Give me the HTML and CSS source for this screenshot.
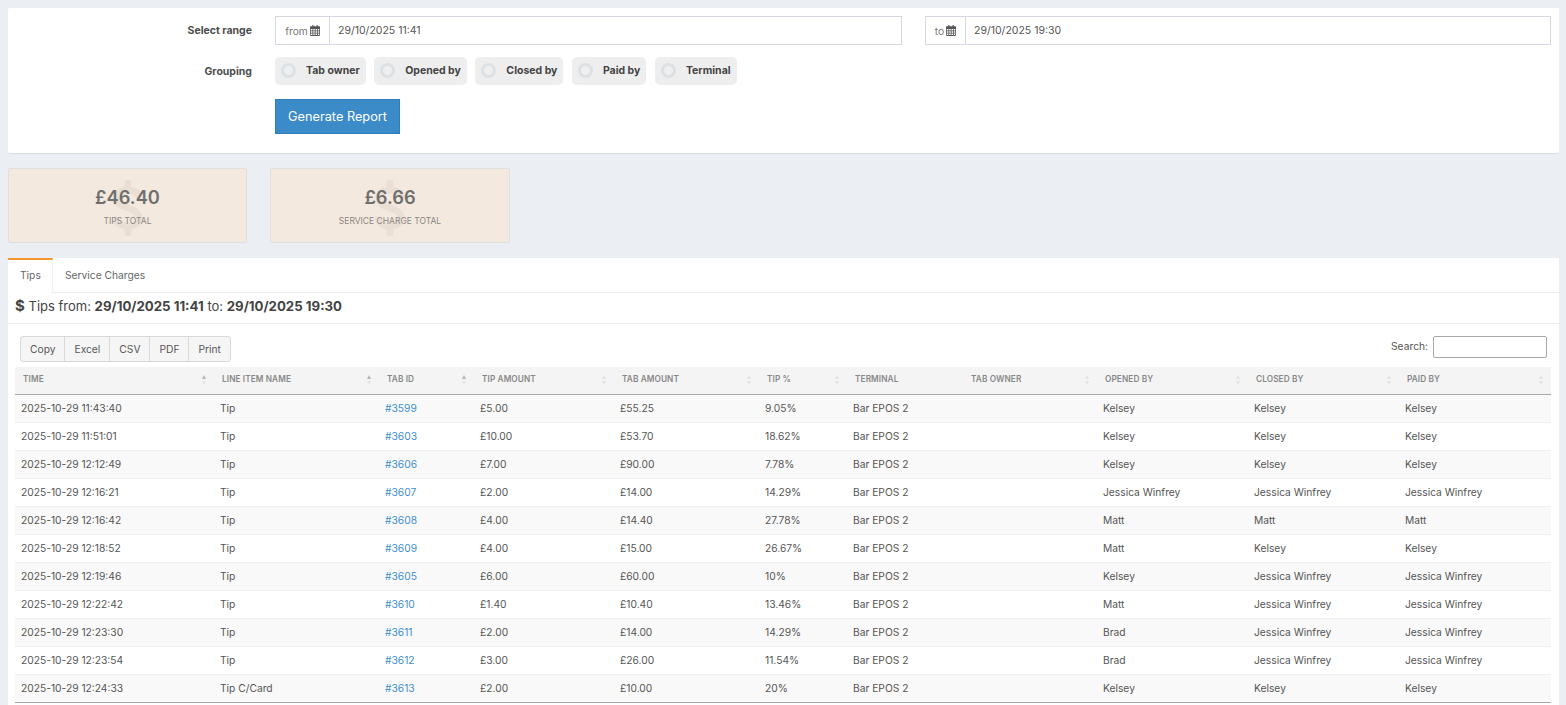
FILE: index.html
```html
<!DOCTYPE html>
<html lang="en">
<head>
<meta charset="utf-8">
<title>Tips report</title>
<link rel="stylesheet" href="styles.css">
</head>
<body>
<svg class="sprite" width="0" height="0" aria-hidden="true"><symbol id="cal" viewBox="0 0 13 14"><path d="M3 0h1.5v1.5h4V0H10v1.5h2a1 1 0 0 1 1 1V13a1 1 0 0 1-1 1H1a1 1 0 0 1-1-1V2.500a1 1 0 0 1 1-1h2zM1 5v2h2.200V5zm3.200 0v2h2V5zm3 0v2h2V5zm3 0v2H12V5zM1 8v2h2.200V8zm3.200 0v2h2V8zm3 0v2h2V8zm3 0v2H12V8zM1 11v2h2.200v-2zm3.200 0v2h2v-2zm3 0v2h2v-2zm3 0v2H12v-2z" fill-rule="evenodd"/></symbol><symbol id="dollar" viewBox="0 0 32 56"><path d="M16 3v6M16 47v6M27 16c-2-4-6-6-11-6C9 10 5 13 5 18c0 6 5 8 11 10s11 4 11 10c0 5-4 8-11 8-6 0-10-2-12-6" fill="none" stroke="currentColor" stroke-width="7" stroke-linecap="round"/></symbol></svg>
<section class="filter">
  <div class="row range-row">
    <div class="label">Select range</div>
    <div class="range-inputs">
      <div class="date"><span class="addon from">from <svg class="cal"><use href="#cal"/></svg></span><span class="value">29/10/2025 11:41</span></div>
      <div class="date"><span class="addon to">to <svg class="cal"><use href="#cal"/></svg></span><span class="value">29/10/2025 19:30</span></div>
    </div>
  </div>
  <div class="row group-row">
    <div class="label">Grouping</div>
    <div class="pills">
      <div class="pill"><i class="radio"></i>Tab owner</div>
      <div class="pill"><i class="radio"></i>Opened by</div>
      <div class="pill"><i class="radio"></i>Closed by</div>
      <div class="pill"><i class="radio"></i>Paid by</div>
      <div class="pill"><i class="radio"></i>Terminal</div>
    </div>
  </div>
  <div class="row btn-row">
    <div class="label"></div>
    <button class="generate">Generate Report</button>
  </div>
</section>

<section class="cards">
  <div class="card"><svg class="ghost" aria-hidden="true"><use href="#dollar"/></svg><div class="amount">£46.40</div><div class="cap">TIPS TOTAL</div></div>
  <div class="card"><svg class="ghost" aria-hidden="true"><use href="#dollar"/></svg><div class="amount">£6.66</div><div class="cap">SERVICE CHARGE TOTAL</div></div>
</section>

<section class="panel">
  <div class="tabs"><div class="tab active">Tips</div><div class="tab">Service Charges</div></div>
  <h2 class="title"><b class="dollar">$</b> Tips from: <b>29/10/2025 11:41</b> to: <b>29/10/2025 19:30</b></h2>
  <div class="body">
    <div class="tools">
      <div class="btns"><span>Copy</span><span>Excel</span><span>CSV</span><span>PDF</span><span>Print</span></div>
      <label class="search">Search: <span class="search-box"></span></label>
    </div>
    <table>
      <colgroup>
        <col class="c1"><col class="c2"><col class="c3"><col class="c4"><col class="c5"><col class="c6"><col class="c7"><col class="c8"><col class="c9"><col class="c10"><col class="c11">
      </colgroup>
      <thead>
        <tr>
          <th class="up">TIME</th><th class="up">LINE ITEM NAME</th><th class="up">TAB ID</th><th>TIP AMOUNT</th><th>TAB AMOUNT</th><th>TIP %</th><th class="plain">TERMINAL</th><th>TAB OWNER</th><th>OPENED BY</th><th>CLOSED BY</th><th>PAID BY</th>
        </tr>
      </thead>
      <tbody>
        <tr><td>2025-10-29 11:43:40</td><td>Tip</td><td><a>#3599</a></td><td>£5.00</td><td>£55.25</td><td>9.05%</td><td>Bar EPOS 2</td><td></td><td>Kelsey</td><td>Kelsey</td><td>Kelsey</td></tr>
        <tr><td>2025-10-29 11:51:01</td><td>Tip</td><td><a>#3603</a></td><td>£10.00</td><td>£53.70</td><td>18.62%</td><td>Bar EPOS 2</td><td></td><td>Kelsey</td><td>Kelsey</td><td>Kelsey</td></tr>
        <tr><td>2025-10-29 12:12:49</td><td>Tip</td><td><a>#3606</a></td><td>£7.00</td><td>£90.00</td><td>7.78%</td><td>Bar EPOS 2</td><td></td><td>Kelsey</td><td>Kelsey</td><td>Kelsey</td></tr>
        <tr><td>2025-10-29 12:16:21</td><td>Tip</td><td><a>#3607</a></td><td>£2.00</td><td>£14.00</td><td>14.29%</td><td>Bar EPOS 2</td><td></td><td>Jessica Winfrey</td><td>Jessica Winfrey</td><td>Jessica Winfrey</td></tr>
        <tr><td>2025-10-29 12:16:42</td><td>Tip</td><td><a>#3608</a></td><td>£4.00</td><td>£14.40</td><td>27.78%</td><td>Bar EPOS 2</td><td></td><td>Matt</td><td>Matt</td><td>Matt</td></tr>
        <tr><td>2025-10-29 12:18:52</td><td>Tip</td><td><a>#3609</a></td><td>£4.00</td><td>£15.00</td><td>26.67%</td><td>Bar EPOS 2</td><td></td><td>Matt</td><td>Kelsey</td><td>Kelsey</td></tr>
        <tr><td>2025-10-29 12:19:46</td><td>Tip</td><td><a>#3605</a></td><td>£6.00</td><td>£60.00</td><td>10%</td><td>Bar EPOS 2</td><td></td><td>Kelsey</td><td>Jessica Winfrey</td><td>Jessica Winfrey</td></tr>
        <tr><td>2025-10-29 12:22:42</td><td>Tip</td><td><a>#3610</a></td><td>£1.40</td><td>£10.40</td><td>13.46%</td><td>Bar EPOS 2</td><td></td><td>Matt</td><td>Jessica Winfrey</td><td>Jessica Winfrey</td></tr>
        <tr><td>2025-10-29 12:23:30</td><td>Tip</td><td><a>#3611</a></td><td>£2.00</td><td>£14.00</td><td>14.29%</td><td>Bar EPOS 2</td><td></td><td>Brad</td><td>Jessica Winfrey</td><td>Jessica Winfrey</td></tr>
        <tr><td>2025-10-29 12:23:54</td><td>Tip</td><td><a>#3612</a></td><td>£3.00</td><td>£26.00</td><td>11.54%</td><td>Bar EPOS 2</td><td></td><td>Brad</td><td>Jessica Winfrey</td><td>Jessica Winfrey</td></tr>
        <tr><td>2025-10-29 12:24:33</td><td>Tip C/Card</td><td><a>#3613</a></td><td>£2.00</td><td>£10.00</td><td>20%</td><td>Bar EPOS 2</td><td></td><td>Kelsey</td><td>Kelsey</td><td>Kelsey</td></tr>
      </tbody>
    </table>
  </div>
</section>
</body>
</html>
```

FILE: styles.css
```css
* { box-sizing: border-box; }
html, body { height: 705px; overflow: hidden; }
body {
  margin: 0;
  padding: 8px 7px 0 8px;
  background: #ebeff4;
  font-family: Inter, "Liberation Sans", sans-serif;
  font-size: 10.25px;
  color: #4a4a4a;
}
.sprite { position: absolute; }

.filter {
  height: 146px;
  background: #fff;
  border-bottom: 1px solid #d9dce2;
  border-radius: 2px;
  padding: 8px 8px 0 0;
}
.row { display: flex; }
.label {
  width: 245px;
  padding-right: 1px;
  margin-right: 22px;
  text-align: right;
  font-weight: 700;
  font-size: 10.5px;
  color: #4d4d4d;
  flex: none;
}
.range-row { height: 29px; align-items: center; }
.range-inputs { flex: 1; display: flex; gap: 23px; }
.date {
  flex: 1;
  display: flex;
  height: 29px;
  border: 1px solid #d5d8e1;
  background: #fff;
}
.date:first-child { flex: 0 0 627px; }
.addon {
  display: flex;
  align-items: center;
  justify-content: center;
  gap: 2px;
  border-right: 1px solid #d5d8e1;
  color: #777;
  flex: none;
}
.addon.from { width: 54px; }
.addon.to { width: 40px; }
.cal { width: 10px; height: 11px; fill: #555; }
.value { padding-left: 8px; line-height: 27px; color: #555; font-size: 10.5px; }

.group-row { margin-top: 12px; height: 28px; }
.group-row .label { padding-top: 8px; }
.pills { display: flex; gap: 8.5px; }
.pill {
  height: 28px;
  padding: 0 6px 2px 6px;
  display: flex;
  align-items: center;
  background: #eee;
  border-radius: 5px;
  font-weight: 700;
  font-size: 10.5px;
  color: #444;
}
.radio {
  width: 15px;
  height: 15px;
  border: 3px solid #dce1e5;
  border-radius: 50%;
  background: #efefef;
  margin-right: 10px;
  flex: none;
}
.btn-row { margin-top: 14px; }
.generate {
  width: 125px;
  height: 35px;
  background: #3a8bc8;
  border: 1px solid #2f7db8;
  color: #fff;
  font-family: inherit;
  font-size: 12.75px;
  padding: 0 0 1px;
}

.cards { display: flex; gap: 23px; margin-top: 14px; }
.card {
  position: relative;
  width: 239px;
  height: 75px;
  background: #f4e9df;
  border: 1px solid #dfdfdf;
  border-radius: 2px;
  text-align: center;
  padding-top: 16px;
}
.card + .card { width: 240px; }
.ghost {
  position: absolute;
  left: calc(50% - 16px);
  top: 11px;
  width: 32px;
  height: 56px;
  color: #eadfd5;
}
.amount { position: relative; font-size: 18.25px; line-height: 24px; font-weight: 600; color: #6f6f6f; }
.cap { position: relative; margin-top: 7px; font-size: 8.5px; line-height: 11px; color: #8a8684; }

.panel { margin-top: 15px; background: #fff; height: 447px; }
.tabs { display: flex; height: 35px; border-bottom: 1px solid #eee; }
.tab { padding: 10px 12px 0; line-height: 15px; color: #666; }
.tab.active { width: 45px; border-top: 2px solid #f6962e; padding-top: 8px; border-right: 1px solid #eee; background: #fff; height: 35px; }
.title {
  margin: 0;
  height: 31px;
  border-bottom: 1px solid #eee;
  padding: 5px 0 0 7px;
  font-size: 13px;
  line-height: 16px;
  font-weight: 400;
  color: #444;
}
.title b { font-weight: 700; font-size: 13.25px; }
.title .dollar { font-size: 15px; font-weight: 700; }
.body { padding: 12px 8px 0 7px; }
.tools { display: flex; justify-content: space-between; padding: 0 4px 0 5px; height: 31px; }
.btns { display: flex; height: 26px; background: #f5f5f5; border: 1px solid #d9d9d9; border-radius: 3px; }
.btns span { padding: 0 9px; line-height: 24px; color: #555; border-right: 1px solid #d9d9d9; }
.btns span:last-child { border-right: 0; }
.search { display: flex; align-items: flex-start; gap: 5px; line-height: 21px; color: #555; }
.search-box { width: 114px; height: 22px; border: 1px solid #a9a9a9; border-radius: 2px; background: #fff; }

table { width: 1536px; border-collapse: collapse; table-layout: fixed; border-bottom: 1px solid #a8a8a8; }
.c1 { width: 199px; } .c2 { width: 165px; } .c3 { width: 95px; } .c4 { width: 140px; }
.c5 { width: 145px; } .c6 { width: 88px; } .c7 { width: 116px; } .c8 { width: 134px; }
.c9 { width: 151px; } .c10 { width: 151px; } .c11 { width: 152px; }
th {
  position: relative;
  height: 27px;
  background: #f4f4f4;
  border-bottom: 1px solid #a8a8a8;
  padding: 0 0 2px 8px;
  text-align: left;
  font-size: 8.25px;
  font-weight: 600;
  color: #888;
  letter-spacing: .1px;
}
th::before, th::after {
  content: "";
  position: absolute;
  right: 8px;
  width: 0;
  height: 0;
  border-left: 2.5px solid transparent;
  border-right: 2.5px solid transparent;
}
th::before { top: 8px; border-bottom: 4px solid #e4e4e4; }
th::after { top: 14px; border-top: 4px solid #e4e4e4; }
th.up::before { border-bottom-color: #b5b5b5; }
th.plain::before, th.plain::after { display: none; }
td { height: 28px; padding: 0 0 0 6px; border-top: 1px solid #f0f0f0; white-space: nowrap; color: #555; }
tbody tr:nth-child(odd) td { background: #f9f9f9; }
tbody tr:first-child td { border-top: 0; }
td a { color: #3f8fd0; }
```
